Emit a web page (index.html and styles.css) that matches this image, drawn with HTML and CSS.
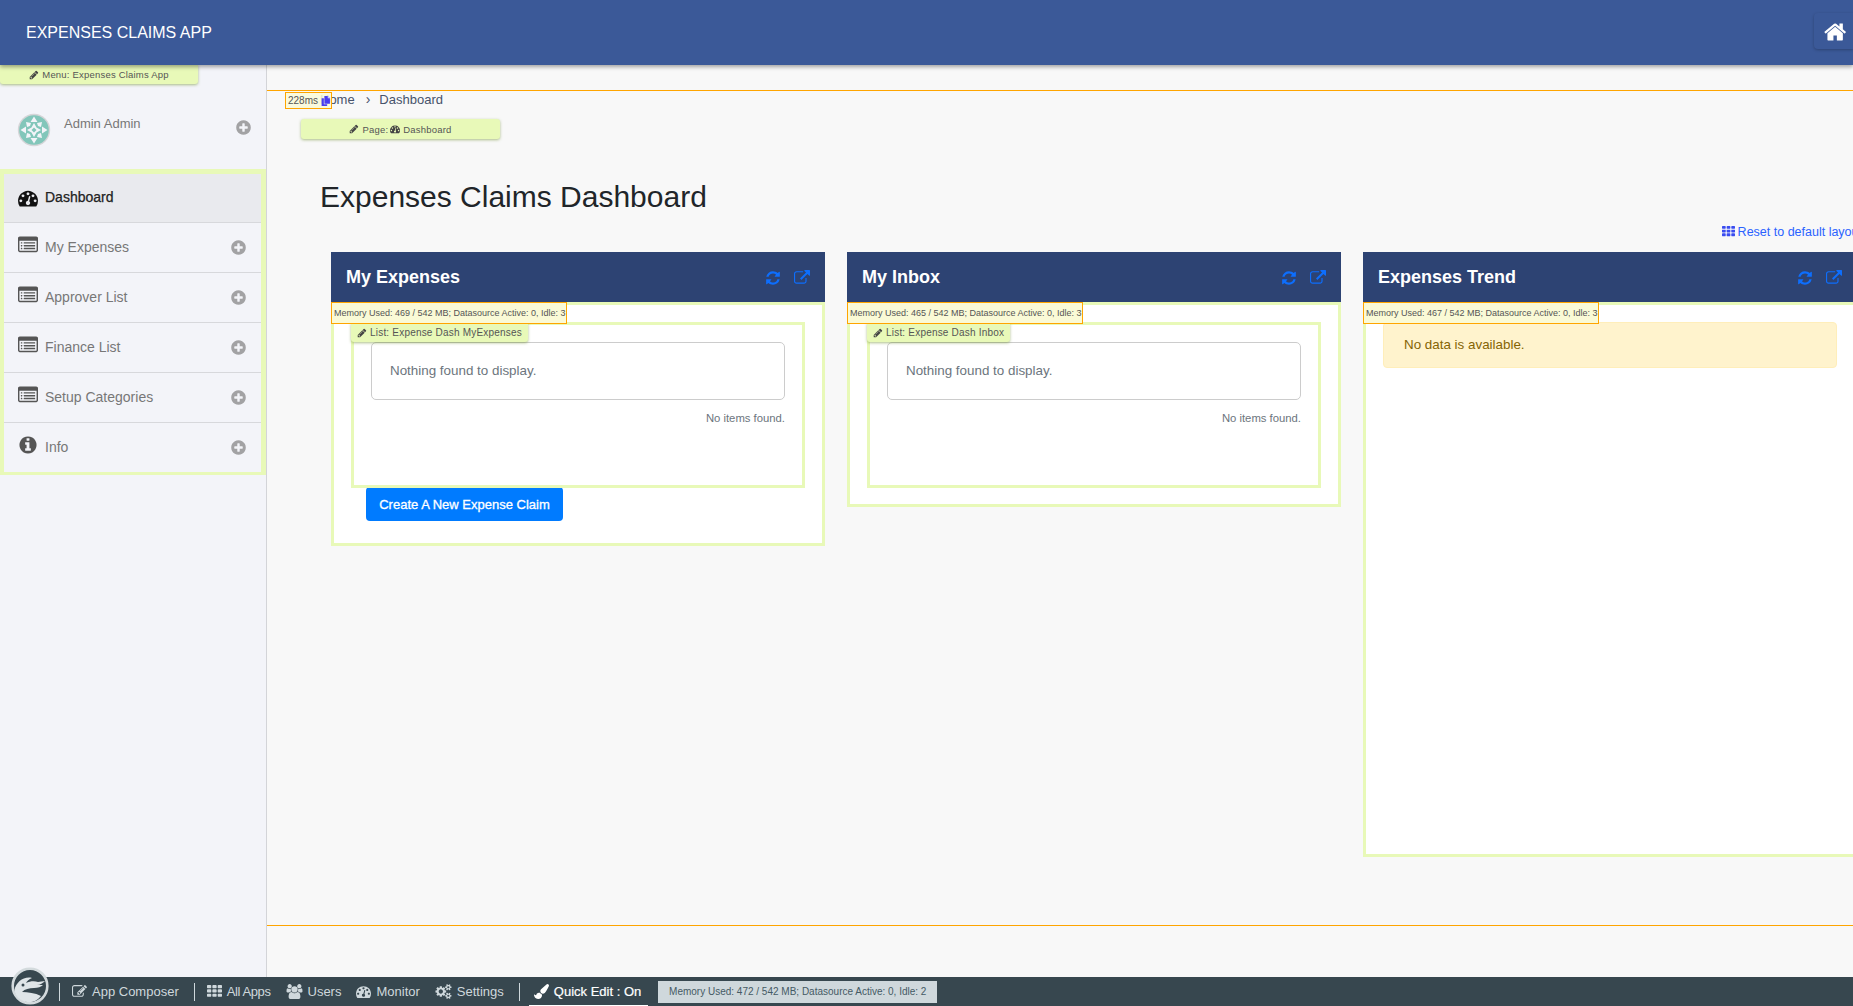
FILE: index.html
```html
<!DOCTYPE html>
<html lang="en">
<head>
<meta charset="utf-8">
<title>Expenses Claims App</title>
<link rel="stylesheet" href="styles.css">
</head>
<body>
<svg class="defs" aria-hidden="true">
  <symbol id="i-home" viewBox="0 0 1792 1792"><path d="M1408 992v480q0 26-19 45t-45 19h-384v-384h-256v384h-384q-26 0-45-19t-19-45v-480q0-1 .5-3t.5-3l575-474 575 474q1 2 1 6zm223-69l-62 74q-8 9-21 11h-3q-13 0-21-7l-692-577-692 577q-12 8-24 7-13-2-21-11l-62-74q-8-10-7-23.5t11-21.5l719-599q32-26 76-26t76 26l244 204v-195q0-14 9-23t23-9h192q14 0 23 9t9 23v408l219 182q10 8 11 21.5t-7 23.5z"/></symbol>
  <symbol id="i-plus" viewBox="0 0 1792 1792"><path d="M1344 960v-128q0-26-19-45t-45-19h-256v-256q0-26-19-45t-45-19h-128q-26 0-45 19t-19 45v256h-256q-26 0-45 19t-19 45v128q0 26 19 45t45 19h256v256q0 26 19 45t45 19h128q26 0 45-19t19-45v-256h256q26 0 45-19t19-45zm320-64q0 209-103 385.5t-279.5 279.5-385.5 103-385.5-103-279.5-279.5-103-385.5 103-385.5 279.5-279.5 385.5-103 385.5 103 279.5 279.5 103 385.5z"/></symbol>
  <symbol id="i-refresh" viewBox="0 0 1792 1792"><path d="M1639 1056q0 5-1 7-64 268-268 434.5t-478 166.5q-146 0-282.5-55t-243.5-157l-129 129q-19 19-45 19t-45-19-19-45v-448q0-26 19-45t45-19h448q26 0 45 19t19 45-19 45l-137 137q71 66 161 102t187 36q134 0 250-65t186-179q11-17 53-117 8-23 30-23h192q13 0 22.5 9.5t9.5 22.5zm25-800v448q0 26-19 45t-45 19h-448q-26 0-45-19t-19-45 19-45l138-138q-148-137-349-137-134 0-250 65t-186 179q-11 17-53 117-8 23-30 23h-199q-13 0-22.5-9.5t-9.5-22.5v-7q65-268 270-434.5t480-166.5q146 0 284 55.5t245 156.5l130-129q19-19 45-19t45 19 19 45z"/></symbol>
  <symbol id="i-ext" viewBox="0 0 1792 1792"><path d="M1408 928v320q0 119-84.5 203.5t-203.5 84.5h-832q-119 0-203.5-84.5t-84.5-203.5v-832q0-119 84.5-203.5t203.5-84.5h704q14 0 23 9t9 23v64q0 14-9 23t-23 9h-704q-66 0-113 47t-47 113v832q0 66 47 113t113 47h832q66 0 113-47t47-113v-320q0-14 9-23t23-9h64q14 0 23 9t9 23zm384-864v512q0 26-19 45t-45 19-45-19l-176-176-652 652q-10 10-23 10t-23-10l-114-114q-10-10-10-23t10-23l652-652-176-176q-19-19-19-45t19-45 45-19h512q26 0 45 19t19 45z"/></symbol>
  <symbol id="i-pencil" viewBox="0 0 1792 1792"><path d="M491 1536l91-91-235-235-91 91v107h128v128h107zm523-928q0-22-22-22-10 0-17 7l-542 542q-7 7-7 17 0 22 22 22 10 0 17-7l542-542q7-7 7-17zm-54-192l416 416-832 832h-416v-416zm683 96q0 53-37 90l-166 166-416-416 166-165q36-38 90-38 53 0 91 38l235 234q37 39 37 91z"/></symbol>
  <symbol id="i-dash" viewBox="0 0 1792 1792"><path d="M384 1152q0-53-37.5-90.5t-90.5-37.5-90.5 37.5-37.5 90.5 37.5 90.5 90.5 37.5 90.5-37.5 37.5-90.5zm192-448q0-53-37.5-90.5t-90.5-37.5-90.5 37.5-37.5 90.5 37.5 90.5 90.5 37.5 90.5-37.5 37.5-90.5zm428 481l101-382q6-26-7.5-48.5t-38.5-29.5-48 6.5-30 39.5l-101 382q-60 5-107 43.5t-63 98.5q-20 77 20 146t117 89 146-20 89-117q16-60-6-117t-72-91zm660-33q0-53-37.5-90.5t-90.5-37.5-90.5 37.5-37.5 90.5 37.5 90.5 90.5 37.5 90.5-37.5 37.5-90.5zm-640-640q0-53-37.5-90.5t-90.5-37.5-90.5 37.5-37.5 90.5 37.5 90.5 90.5 37.5 90.5-37.5 37.5-90.5zm448 192q0-53-37.5-90.5t-90.5-37.5-90.5 37.5-37.5 90.5 37.5 90.5 90.5 37.5 90.5-37.5 37.5-90.5zm320 448q0 261-141 483-19 29-54 29h-1402q-35 0-54-29-141-221-141-483 0-182 71-348t191-286 286-191 348-71 348 71 286 191 191 286 71 348z"/></symbol>
  <symbol id="i-list" viewBox="0 0 1792 1792"><path d="M384 1184v64q0 13-9.5 22.5t-22.5 9.5h-64q-13 0-22.5-9.5t-9.5-22.5v-64q0-13 9.5-22.5t22.5-9.5h64q13 0 22.5 9.5t9.5 22.5zm0-256v64q0 13-9.5 22.5t-22.5 9.5h-64q-13 0-22.5-9.5t-9.5-22.5v-64q0-13 9.5-22.5t22.5-9.5h64q13 0 22.5 9.5t9.5 22.5zm0-256v64q0 13-9.5 22.5t-22.5 9.5h-64q-13 0-22.5-9.5t-9.5-22.5v-64q0-13 9.5-22.5t22.5-9.5h64q13 0 22.5 9.5t9.5 22.5zm1152 512v64q0 13-9.5 22.5t-22.5 9.5h-960q-13 0-22.5-9.5t-9.5-22.5v-64q0-13 9.5-22.5t22.5-9.5h960q13 0 22.5 9.5t9.5 22.5zm0-256v64q0 13-9.5 22.5t-22.5 9.5h-960q-13 0-22.5-9.5t-9.5-22.5v-64q0-13 9.5-22.5t22.5-9.5h960q13 0 22.5 9.5t9.5 22.5zm0-256v64q0 13-9.5 22.5t-22.5 9.5h-960q-13 0-22.5-9.5t-9.5-22.5v-64q0-13 9.5-22.5t22.5-9.5h960q13 0 22.5 9.5t9.5 22.5zm128 704v-832q0-13-9.5-22.5t-22.5-9.5h-1472q-13 0-22.5 9.5t-9.5 22.5v832q0 13 9.5 22.5t22.5 9.5h1472q13 0 22.5-9.5t9.5-22.5zm128-1088v1088q0 66-47 113t-113 47h-1472q-66 0-113-47t-47-113v-1088q0-66 47-113t113-47h1472q66 0 113 47t47 113z"/></symbol>
  <symbol id="i-info" viewBox="0 0 1792 1792"><path d="M1152 1376v-160q0-14-9-23t-23-9h-96v-512q0-14-9-23t-23-9h-320q-14 0-23 9t-9 23v160q0 14 9 23t23 9h96v320h-96q-14 0-23 9t-9 23v160q0 14 9 23t23 9h448q14 0 23-9t9-23zm-128-896v-160q0-14-9-23t-23-9h-192q-14 0-23 9t-9 23v160q0 14 9 23t23 9h192q14 0 23-9t9-23zm640 416q0 209-103 385.5t-279.5 279.5-385.5 103-385.5-103-279.5-279.5-103-385.5 103-385.5 279.5-279.5 385.5-103 385.5 103 279.5 279.5 103 385.5z"/></symbol>
  <symbol id="i-th" viewBox="0 0 1792 1792"><path d="M512 1248v192q0 40-28 68t-68 28h-320q-40 0-68-28t-28-68v-192q0-40 28-68t68-28h320q40 0 68 28t28 68zm0-512v192q0 40-28 68t-68 28h-320q-40 0-68-28t-28-68v-192q0-40 28-68t68-28h320q40 0 68 28t28 68zm640 512v192q0 40-28 68t-68 28h-320q-40 0-68-28t-28-68v-192q0-40 28-68t68-28h320q40 0 68 28t28 68zm-640-1024v192q0 40-28 68t-68 28h-320q-40 0-68-28t-28-68v-192q0-40 28-68t68-28h320q40 0 68 28t28 68zm640 512v192q0 40-28 68t-68 28h-320q-40 0-68-28t-28-68v-192q0-40 28-68t68-28h320q40 0 68 28t28 68zm640 512v192q0 40-28 68t-68 28h-320q-40 0-68-28t-28-68v-192q0-40 28-68t68-28h320q40 0 68 28t28 68zm-640-1024v192q0 40-28 68t-68 28h-320q-40 0-68-28t-28-68v-192q0-40 28-68t68-28h320q40 0 68 28t28 68zm640 512v192q0 40-28 68t-68 28h-320q-40 0-68-28t-28-68v-192q0-40 28-68t68-28h320q40 0 68 28t28 68zm0-512v192q0 40-28 68t-68 28h-320q-40 0-68-28t-28-68v-192q0-40 28-68t68-28h320q40 0 68 28t28 68z"/></symbol>
  <symbol id="i-edit" viewBox="0 0 1792 1792"><path d="M888 1184l116-116-152-152-116 116v56h96v96h56zm440-720q-16-16-33 1l-350 350q-17 17-1 33t33-1l350-350q17-17 1-33zm80 594v190q0 119-84.5 203.5t-203.5 84.5h-832q-119 0-203.5-84.5t-84.5-203.5v-832q0-119 84.5-203.5t203.5-84.5h832q63 0 117 25 15 7 18 23 3 17-9 29l-49 49q-14 14-32 8-23-6-45-6h-832q-66 0-113 47t-47 113v832q0 66 47 113t113 47h832q66 0 113-47t47-113v-126q0-13 9-22l64-64q15-15 35-7t20 29zm-96-738l288 288-672 672h-288v-288zm444 132l-92 92-288-288 92-92q28-28 68-28t68 28l152 152q28 28 28 68t-28 68z"/></symbol>
  <symbol id="i-users" viewBox="0 0 1920 1792"><path d="M593 896q-162 5-265 128h-134q-82 0-138-40.5t-56-118.5q0-353 124-353 6 0 43.5 21t97.5 42.5 119 21.5q67 0 133-23-5 37-5 66 0 139 81 256zm1071 637q0 120-73 189.5t-194 69.5h-874q-121 0-194-69.5t-73-189.5q0-53 3.5-103.5t14-109 26.5-108.5 43-97.5 62-81 85.5-53.5 111.5-20q10 0 43 21.5t73 48 107 48 135 21.5 135-21.5 107-48 73-48 43-21.5q61 0 111.5 20t85.5 53.5 62 81 43 97.5 26.5 108.5 14 109 3.5 103.5zm-1024-1277q0 106-75 181t-181 75-181-75-75-181 75-181 181-75 181 75 75 181zm704 384q0 159-112.5 271.5t-271.5 112.5-271.5-112.5-112.5-271.5 112.5-271.5 271.5-112.5 271.5 112.5 112.5 271.5zm576 225q0 78-56 118.5t-138 40.5h-134q-103-123-265-128 81-117 81-256 0-29-5-66 66 23 133 23 59 0 119-21.5t97.5-42.5 43.5-21q124 0 124 353zm-128-609q0 106-75 181t-181 75-181-75-75-181 75-181 181-75 181 75 75 181z"/></symbol>
  <symbol id="i-cogs" viewBox="0 0 1920 1792"><path d="M896 896q0-106-75-181t-181-75-181 75-75 181 75 181 181 75 181-75 75-181zm768 512q0-52-38-90t-90-38-90 38-38 90q0 53 37.5 90.5t90.5 37.5 90.5-37.5 37.5-90.5zm0-1024q0-52-38-90t-90-38-90 38-38 90q0 53 37.5 90.5t90.5 37.5 90.5-37.5 37.5-90.5zm-384 421v185q0 10-7 19.5t-16 10.5l-155 24q-11 35-32 76 34 48 90 115 7 11 7 20 0 12-7 19-23 30-82.5 89.5t-78.5 59.5q-11 0-21-7l-115-90q-37 19-77 31-11 108-23 155-7 24-30 24h-186q-11 0-20-7.5t-10-17.5l-23-153q-34-10-75-31l-118 89q-7 7-20 7-11 0-21-8-144-133-144-160 0-9 7-19 10-14 41-53t47-61q-23-44-35-82l-152-24q-10-1-17-9.5t-7-19.5v-185q0-10 7-19.5t16-10.5l155-24q11-35 32-76-34-48-90-115-7-11-7-20 0-12 7-20 22-30 82-89t79-59q11 0 21 7l115 90q34-18 77-32 11-108 23-154 7-24 30-24h186q11 0 20 7.5t10 17.5l23 153q34 10 75 31l118-89q8-7 20-7 11 0 21 8 144 133 144 160 0 8-7 19-12 16-42 54t-45 60q23 48 34 82l152 23q10 2 17 10.5t7 19.5zm640 533v140q0 16-149 31-12 27-30 52 51 113 51 138 0 4-4 7-122 71-124 71-8 0-46-47t-52-68q-20 2-30 2t-30-2q-14 21-52 68t-46 47q-2 0-124-71-4-3-4-7 0-25 51-138-18-25-30-52-149-15-149-31v-140q0-16 149-31 13-29 30-52-51-113-51-138 0-4 4-7 4-2 35-20t59-34 30-16q8 0 46 46.5t52 67.5q20-2 30-2t30 2q51-71 92-112l6-2q4 0 124 70 4 3 4 7 0 25-51 138 17 23 30 52 149 15 149 31zm0-1024v140q0 16-149 31-12 27-30 52 51 113 51 138 0 4-4 7-122 71-124 71-8 0-46-47t-52-68q-20 2-30 2t-30-2q-14 21-52 68t-46 47q-2 0-124-71-4-3-4-7 0-25 51-138-18-25-30-52-149-15-149-31v-140q0-16 149-31 13-29 30-52-51-113-51-138 0-4 4-7 4-2 35-20t59-34 30-16q8 0 46 46.5t52 67.5q20-2 30-2t30 2q51-71 92-112l6-2q4 0 124 70 4 3 4 7 0 25-51 138 17 23 30 52 149 15 149 31z"/></symbol>
  <symbol id="i-brush" viewBox="0 0 1792 1792"><path d="M1615 0q70 0 122.5 46.5t52.5 116.5q0 63-45 151-332 629-465 752-97 91-218 91-126 0-216.5-92.5t-90.5-219.5q0-128 92-212l638-579q59-54 130-54zm-909 1034q39 76 106.5 130t150.5 76l1 71q4 213-129.5 347t-348.5 134q-123 0-218-46.5t-152.5-127.5-86.5-183-29-220q7 5 41 30t62 44.5 59 36.5 46 17q41 0 55-37 25-66 57.5-112.5t69.5-76 88-47.5 103-25.5 125-10.5z"/></symbol>
  <symbol id="i-copy" viewBox="0 0 16 18"><path d="M6 0h6l4 4v10H6z"/><path d="M12 0v4h4" fill="#cfd0ff"/><path d="M1 4h4v11h6v3H1z"/></symbol>
</svg>

<header class="topbar">
  <span class="brand">EXPENSES CLAIMS APP</span>
  <span class="home-btn"><svg class="ico-home"><use href="#i-home"/></svg></span>
</header>

<div class="shell">
  <aside class="sidebar">
    <div class="tag tag-menu"><svg class="ico-pen"><use href="#i-pencil"/></svg>Menu: Expenses Claims App</div>
    <div class="user">
      <svg class="avatar" viewBox="0 0 34 34">
        <circle cx="17" cy="17" r="16.200" fill="#d5d5d8"/>
        <circle cx="17" cy="17" r="14.800" fill="#82c6ba"/>
        <g fill="#f3f4f9">
          <path d="M17 3.500l3.500 5.500h-7zM17 30.500l-3.500-5.500h7zM3.500 17l5.500-3.500v7zM30.500 17l-5.500 3.500v-7z"/>
          <path d="M9 9l5 1-1 3-3 1zM25 9l-1 5-3-1-1-3zM9 25l1-5 3 1 1 3zM25 25l-5-1 1-3 3-1z"/>
          <path d="M17 10l2.500 4.500L24 17l-4.500 2.500L17 24l-2.500-4.500L10 17l4.500-2.500z"/>
        </g>
        <path d="M17 14.500l2.500 2.500-2.500 2.500-2.500-2.500z" fill="#82c6ba"/>
      </svg>
      <span class="user-name">Admin Admin</span>
      <svg class="ico-plus user-plus"><use href="#i-plus"/></svg>
    </div>
    <nav class="nav">
      <a class="nav-item active"><svg class="nav-ico"><use href="#i-dash"/></svg><span>Dashboard</span></a>
      <a class="nav-item"><svg class="nav-ico"><use href="#i-list"/></svg><span>My Expenses</span><svg class="ico-plus"><use href="#i-plus"/></svg></a>
      <a class="nav-item"><svg class="nav-ico"><use href="#i-list"/></svg><span>Approver List</span><svg class="ico-plus"><use href="#i-plus"/></svg></a>
      <a class="nav-item"><svg class="nav-ico"><use href="#i-list"/></svg><span>Finance List</span><svg class="ico-plus"><use href="#i-plus"/></svg></a>
      <a class="nav-item"><svg class="nav-ico"><use href="#i-list"/></svg><span>Setup Categories</span><svg class="ico-plus"><use href="#i-plus"/></svg></a>
      <a class="nav-item last"><svg class="nav-ico"><use href="#i-info"/></svg><span>Info</span><svg class="ico-plus"><use href="#i-plus"/></svg></a>
    </nav>
  </aside>

  <main class="main">
    <div class="strip"></div>
    <section class="page">
      <div class="time-tag">228ms<svg class="ico-copy"><use href="#i-copy"/></svg></div>
      <div class="crumbs"><span>Home</span><span class="sep">›</span><span>Dashboard</span></div>
      <div class="tag tag-page"><svg class="ico-pen"><use href="#i-pencil"/></svg>Page: <svg class="ico-dash-small"><use href="#i-dash"/></svg>Dashboard</div>
      <h1 class="title">Expenses Claims Dashboard</h1>
      <div class="reset-row"><a class="reset"><svg class="ico-th"><use href="#i-th"/></svg>Reset to default layout</a></div>
      <div class="cards">
        <article class="card">
          <div class="card-head"><h2>My Expenses</h2><span class="card-tools"><svg><use href="#i-refresh"/></svg><svg><use href="#i-ext"/></svg></span></div>
          <div class="card-body body-expenses">
            <div class="mem">Memory Used: 469 / 542 MB; Datasource Active: 0, Idle: 3</div>
            <div class="list">
              <div class="tag tag-list"><svg class="ico-pen"><use href="#i-pencil"/></svg>List: Expense Dash MyExpenses</div>
              <div class="empty">Nothing found to display.</div>
              <div class="count">No items found.</div>
            </div>
            <a class="btn">Create A New Expense Claim</a>
          </div>
        </article>
        <article class="card">
          <div class="card-head"><h2>My Inbox</h2><span class="card-tools"><svg><use href="#i-refresh"/></svg><svg><use href="#i-ext"/></svg></span></div>
          <div class="card-body body-inbox">
            <div class="mem">Memory Used: 465 / 542 MB; Datasource Active: 0, Idle: 3</div>
            <div class="list">
              <div class="tag tag-list"><svg class="ico-pen"><use href="#i-pencil"/></svg>List: Expense Dash Inbox</div>
              <div class="empty">Nothing found to display.</div>
              <div class="count">No items found.</div>
            </div>
          </div>
        </article>
        <article class="card">
          <div class="card-head"><h2>Expenses Trend</h2><span class="card-tools"><svg><use href="#i-refresh"/></svg><svg><use href="#i-ext"/></svg></span></div>
          <div class="card-body body-trend">
            <div class="mem">Memory Used: 467 / 542 MB; Datasource Active: 0, Idle: 3</div>
            <div class="alert">No data is available.</div>
          </div>
        </article>
      </div>
    </section>
  </main>
</div>

<footer class="bottombar">
  <svg class="logo" viewBox="0 0 38 38">
    <circle cx="19" cy="19" r="17.300" fill="#37474f" stroke="#d3dadd" stroke-width="2.600"/>
    <path d="M3.500 23C5 15 13 9 21 11c-3 1-5 3-6 5 4-2 9-2 12-1l7-1c-2 2-5 4-8 4l6 0c-2 2-5 3-9 3-5 0-9 1-12 4 6 0 13 1 19 4-4 5-9 7-14 6-7-1-12-6-12.500-12z" fill="#dfe5e8"/>
    <circle cx="12" cy="18" r="1.500" fill="#37474f"/>
  </svg>
  <span class="bar-div"></span>
  <a class="bar-link"><svg class="bar-ico"><use href="#i-edit"/></svg>App Composer</a>
  <span class="bar-div"></span>
  <a class="bar-link tight"><svg class="bar-ico"><use href="#i-th"/></svg>All Apps</a>
  <a class="bar-link"><svg class="bar-ico wide"><use href="#i-users"/></svg>Users</a>
  <a class="bar-link"><svg class="bar-ico"><use href="#i-dash"/></svg>Monitor</a>
  <a class="bar-link"><svg class="bar-ico wide"><use href="#i-cogs"/></svg>Settings</a>
  <span class="bar-div"></span>
  <a class="bar-link quick"><svg class="bar-ico"><use href="#i-brush"/></svg>Quick Edit : On</a>
  <span class="stat">Memory Used: 472 / 542 MB; Datasource Active: 0, Idle: 2</span>
</footer>
</body>
</html>
```

FILE: styles.css
```css
* { box-sizing: border-box; }
html, body { margin: 0; height: 100%; }
body {
  width: 1853px;
  height: 1006px;
  overflow: hidden;
  display: flex;
  flex-direction: column;
  font-family: "Liberation Sans", Arial, sans-serif;
  color: #212529;
  background: #f8f8f8;
}
.defs { position: absolute; width: 0; height: 0; }
svg { fill: currentColor; display: block; flex-shrink: 0; }
a { color: inherit; text-decoration: none; }

/* top bar */
.topbar {
  height: 65px;
  flex-shrink: 0;
  background: #3b5998;
  color: #fff;
  display: flex;
  align-items: center;
  justify-content: space-between;
  padding-left: 26px;
  box-shadow: 0 2px 4px rgba(0,0,0,.35);
  position: relative;
  z-index: 3;
}
.brand { font-size: 16px; margin-top: 1px; }
.home-btn {
  width: 39px;
  height: 36px;
  margin-top: -4px;
  padding: 7px 0 0 10px;
  border-radius: 4px 0 0 4px;
  box-shadow: 0 1px 3px rgba(0,0,0,.25);
}
.ico-home { width: 24px; height: 24px; }

.shell { flex: 1; display: flex; min-height: 0; }

/* sidebar */
.sidebar {
  width: 267px;
  flex-shrink: 0;
  background: #f3f4f9;
  border-right: 1px solid #d3d4d8;
  display: flex;
  flex-direction: column;
}
.tag {
  background: #e8f9b8;
  color: #555;
  font-size: 9.500px;
  letter-spacing: .2px;
  display: flex;
  align-items: center;
  justify-content: center;
  box-shadow: 0 1px 3px rgba(120,150,60,.6);
  border-radius: 0 0 3px 3px;
  white-space: nowrap;
}
.ico-pen { width: 10px; height: 10px; margin-right: 3px; color: #444; }
.tag-menu { width: 198px; height: 19px; }
.user {
  height: 85px;
  position: relative;
}
.avatar { position: absolute; left: 17px; top: 29px; width: 34px; height: 34px; }
.user-name {
  position: absolute; left: 64px; top: 32px;
  font-size: 13px; line-height: 16px; color: #777;
}
.user-plus { position: absolute; left: 235px; top: 35px; }
.ico-plus { width: 17px; height: 17px; color: #a2a2a4; }
.nav {
  border: solid #e8f9b8;
  border-width: 5px 5px 3px 4px;
  display: flex;
  flex-direction: column;
}
.nav-item {
  height: 50px;
  padding: 0 14px 0 14px;
  display: flex;
  align-items: center;
  gap: 7px;
  font-size: 14px;
  color: #777;
  border-bottom: 1px solid #d7d8dc;
}
.nav-item span { flex: 1; padding-bottom: 2px; }
.nav-item.active {
  height: 49px;
  background: #e9eaee;
  color: #222;
  -webkit-text-stroke: .25px #222;
}
.nav-item.last { border-bottom: 0; height: 49px; }
.nav-ico { width: 20px; height: 20px; color: #555; margin-top: -5px; }
.active .nav-ico { color: #111; margin-top: 0; }

/* main */
.main { flex: 1; min-width: 0; display: flex; flex-direction: column; }
.strip { height: 25px; flex-shrink: 0; }
.page {
  height: 836px;
  flex-shrink: 0;
  border-top: 1px solid #ffa500;
  border-bottom: 1px solid #ffa500;
  position: relative;
  padding-left: 53px;
}
.time-tag {
  position: absolute; left: 18px; top: 1px;
  width: 47px; height: 17px;
  border: 1px solid #ffa500;
  background: rgba(250,250,215,.85);
  font-size: 10px;
  line-height: 15px;
  padding-left: 2px;
  color: #555;
  display: flex;
  align-items: center;
  z-index: 2;
}
.ico-copy { width: 9px; height: 10px; margin-left: 3px; color: #4a3cf0; }
.crumbs {
  height: 18px;
  margin-top: -1px;
  display: flex;
  align-items: center;
  font-size: 13px;
  color: #47536b;
}
.sep { margin: 0 9px 0 11px; font-size: 14px; }
.tag-page {
  position: absolute; left: 34px; top: 28px;
  width: 199px; height: 20px;
  border-radius: 3px;
}
.ico-dash-small { width: 10px; height: 10px; margin: 0 3px 0 2px; color: #444; }
.title {
  margin: 71px 0 0;
  font-size: 30px;
  font-weight: 400;
  line-height: 36px;
  color: #212529;
}
.reset-row {
  margin-top: 9px;
  width: 1531px;
  margin-left: 11px;
  height: 28px;
  display: flex;
  justify-content: flex-end;
}
.reset {
  font-size: 12.500px;
  color: #2a62ff;
  display: flex;
  align-items: flex-start;
  line-height: 16px;
}
.ico-th { width: 13px; height: 13px; margin: 1px 3px 0 0; color: #3a4cf0; }
.cards {
  display: flex;
  align-items: flex-start;
  gap: 22px;
  margin-left: 11px;
  width: 1526px;
}
.card { width: 494px; flex-shrink: 0; }
.card-head {
  height: 50px;
  background: #2d4373;
  display: flex;
  align-items: center;
  justify-content: space-between;
  padding: 0 15px;
  color: #fff;
}
.card-head h2 { margin: 0; font-size: 18px; font-weight: 700; line-height: 22px; }
.card-tools { display: flex; gap: 13px; color: #0d6efd; margin-top: 1px; }
.card-tools svg { width: 16px; height: 16px; }
.card-body {
  background: #fff;
  border: 3px solid #e8f9b8;
  position: relative;
  padding: 17px 17px 0;
}
.body-expenses { height: 244px; }
.body-inbox { height: 205px; }
.body-trend { height: 555px; }
.mem {
  position: absolute; left: -3px; top: -3px;
  width: 236px; height: 22px;
  border: 1px solid #ffa500;
  background: #fafad6;
  font-size: 9px;
  line-height: 20px;
  padding-left: 2px;
  color: #555;
  white-space: nowrap;
  z-index: 1;
}
.list {
  height: 166px;
  border: 3px solid #e8f9b8;
  position: relative;
  padding: 17px 17px 0;
}
.tag-list {
  position: absolute; left: -3px; top: -2px;
  height: 19px;
  padding: 0 6px;
  font-size: 10px;
  border-radius: 0 0 3px 3px;
}
.empty {
  height: 58px;
  border: 1px solid #ccc;
  border-radius: 5px;
  padding-left: 18px;
  line-height: 56px;
  font-size: 13.400px;
  color: #6c757d;
}
.count {
  margin-top: 12px;
  text-align: right;
  font-size: 11.300px;
  color: #6c757d;
  line-height: 12px;
}
.btn {
  display: flex;
  align-items: center;
  justify-content: center;
  width: 197px;
  height: 34px;
  margin: -1px 0 0 15px;
  background: #007bff;
  color: #fff;
  border-radius: 4px;
  font-size: 13px;
  -webkit-text-stroke: .3px #fff;
}
.alert {
  height: 46px;
  background: #fff3cd;
  border: 1px solid #ffeeba;
  border-radius: 4px;
  padding-left: 20px;
  line-height: 44px;
  font-size: 13.400px;
  color: #856404;
}

/* bottom bar */
.bottombar {
  height: 29px;
  flex-shrink: 0;
  background: #37474f;
  color: #cfd8dc;
  display: flex;
  align-items: center;
  font-size: 13px;
  padding-left: 59px;
  position: relative;
  z-index: 2;
}
.logo { position: absolute; left: 11px; top: -10px; width: 38px; height: 38px; }
.bar-div { width: 1px; height: 18px; background: #cfd8dc; }
.bar-link { display: flex; align-items: center; gap: 5px; margin-right: 15px; position: relative; height: 100%; white-space: nowrap; }
.bar-link.tight { letter-spacing: -.4px; }
.bar-ico { width: 15px; height: 15px; }
.bar-ico.wide { width: 17px; }
.bar-div + .bar-link { margin-left: 12px; }
.bar-div + .bar-link.quick { margin-left: 14px; margin-right: 17px; }
.quick {
  color: #fff;
  -webkit-text-stroke: .2px #fff;
}
.quick::after {
  content: "";
  position: absolute; left: -5px; right: -7px; bottom: 0;
  height: 1px; background: #fff;
}
.stat {
  width: 279px;
  height: 22px;
  background: #cfd8dc;
  color: #455a64;
  font-size: 10px;
  line-height: 22px;
  text-align: center;
  white-space: nowrap;
}
```
